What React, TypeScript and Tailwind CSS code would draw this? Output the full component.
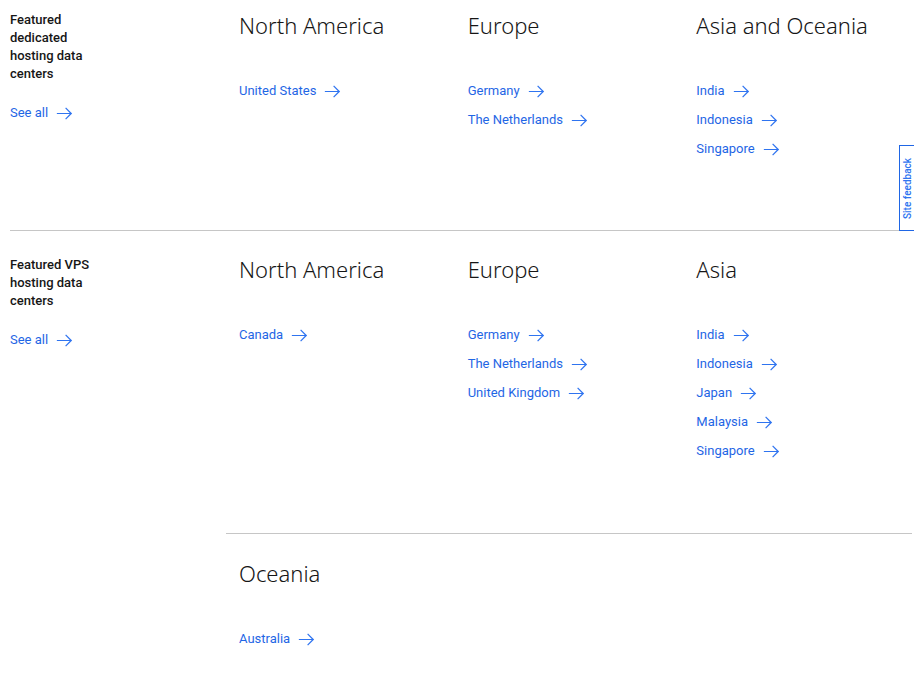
type Region = {
  name: string;
  places: string[];
};

type Section = {
  title: string;
  rows: Region[][];
};

const sections: Section[] = [
  {
    title: "Featured dedicated hosting data centers",
    rows: [
      [
        { name: "North America", places: ["United States"] },
        { name: "Europe", places: ["Germany", "The Netherlands"] },
        { name: "Asia and Oceania", places: ["India", "Indonesia", "Singapore"] },
      ],
    ],
  },
  {
    title: "Featured VPS hosting data centers",
    rows: [
      [
        { name: "North America", places: ["Canada"] },
        { name: "Europe", places: ["Germany", "The Netherlands", "United Kingdom"] },
        { name: "Asia", places: ["India", "Indonesia", "Japan", "Malaysia", "Singapore"] },
      ],
      [{ name: "Oceania", places: ["Australia"] }],
    ],
  },
];

function ArrowLink({ label }: { label: string }) {
  return (
    <a
      href="#"
      className="flex w-fit items-center gap-2 text-[13px] leading-5 text-[#1f66e5] hover:underline"
    >
      {label}
      <svg viewBox="0 0 20 20" className="size-[17px] text-[#2f74f0]" fill="currentColor" aria-hidden="true">
        <path d="M11.8 2.8L10.8 3.8 16.2 9.3 1 9.3 1 10.7 16.2 10.7 10.8 16.2 11.8 17.2 19 10z" />
      </svg>
    </a>
  );
}

function RegionColumn({ region }: { region: Region }) {
  return (
    <div className="pl-[13px]">
      <h3 className="font-['Noto_Sans',sans-serif] text-[22px] leading-6 font-light whitespace-nowrap text-[#161616]">
        {region.name}
      </h3>
      <ul className="mt-11 flex flex-col gap-[9px]">
        {region.places.map((p) => (
          <li key={p}>
            <ArrowLink label={p} />
          </li>
        ))}
      </ul>
    </div>
  );
}

export default function App() {
  return (
    <div className="min-h-screen bg-white pr-0.5 pl-2.5 font-[Roboto,sans-serif] text-[#161616]">
      {sections.map((s, i) => (
        <section key={s.title} className={i > 0 ? "flex border-t border-[#c6c6c6]" : "flex"}>
          <div className={i > 0 ? "w-[216px] shrink-0 pt-[25px]" : "w-[216px] shrink-0 pt-[11px]"}>
            <h2 className="mb-5 w-24 text-[13px] leading-[18px] font-medium">{s.title}</h2>
            <ArrowLink label="See all" />
          </div>
          <div className="flex-1">
            {s.rows.map((row, j) => (
              <div
                key={j}
                className={
                  j > 0
                    ? "grid grid-cols-3 border-t border-[#c6c6c6] pt-[27px] pb-6"
                    : i > 0
                      ? "grid grid-cols-3 pt-[26px] pb-[72px]"
                      : "grid grid-cols-3 pt-[13px] pb-[71px]"
                }
              >
                {row.map((r) => (
                  <RegionColumn key={r.name} region={r} />
                ))}
              </div>
            ))}
          </div>
        </section>
      ))}

      <button
        type="button"
        className="fixed top-[145px] right-0 flex h-[86px] w-[15px] items-center border border-r-0 border-[#1f66e5] bg-white pl-0.5"
      >
        <span className="rotate-180 text-[10px] leading-3 font-medium whitespace-nowrap text-[#2f74f0] [writing-mode:vertical-rl]">
          Site feedback
        </span>
      </button>
    </div>
  );
}
